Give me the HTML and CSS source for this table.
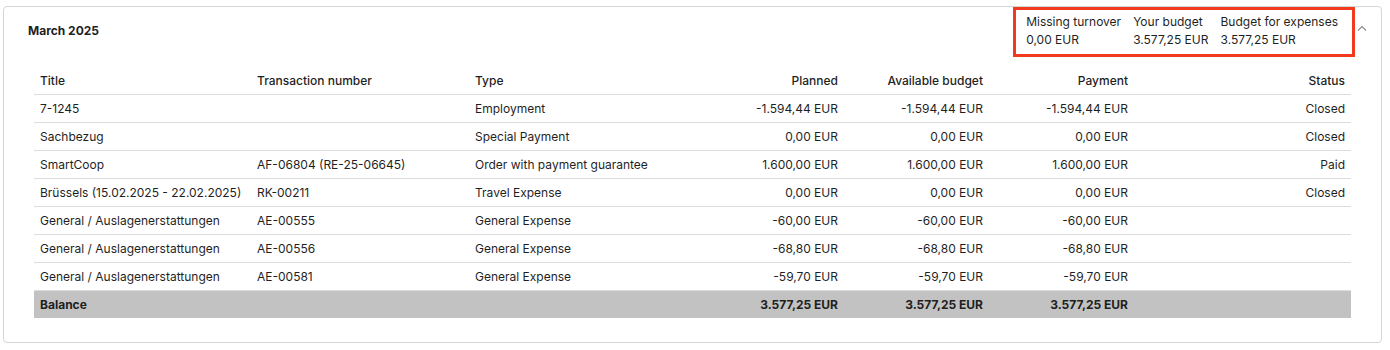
FILE: index.html
```html
<!DOCTYPE html>
<html>
<head>
<meta charset="utf-8">
<link rel="stylesheet" href="styles.css">
</head>
<body>
<div class="card">
  <div class="card-header">
    <div class="month">March 2025</div>
    <div class="summary">
      <div class="stat"><div>Missing turnover</div><div>0,00 EUR</div></div>
      <div class="stat"><div>Your budget</div><div>3.577,25 EUR</div></div>
      <div class="stat"><div>Budget for expenses</div><div>3.577,25 EUR</div></div>
    </div>
    <svg class="chevron" width="10" height="6" viewBox="0 0 10 6"><polyline points="1,5.5 5,1.5 9,5.5" fill="none" stroke="#8a8a8a" stroke-width="1.1"/></svg>
  </div>
  <table class="ledger">
    <colgroup>
      <col class="c1"><col class="c2"><col class="c3"><col class="c4"><col class="c5"><col class="c6"><col class="c7">
    </colgroup>
    <thead>
      <tr><th>Title</th><th>Transaction number</th><th>Type</th><th class="r">Planned</th><th class="r">Available budget</th><th class="r">Payment</th><th class="r">Status</th></tr>
    </thead>
    <tbody>
      <tr><td>7-1245</td><td></td><td>Employment</td><td class="r">-1.594,44 EUR</td><td class="r">-1.594,44 EUR</td><td class="r">-1.594,44 EUR</td><td class="r">Closed</td></tr>
      <tr><td>Sachbezug</td><td></td><td>Special Payment</td><td class="r">0,00 EUR</td><td class="r">0,00 EUR</td><td class="r">0,00 EUR</td><td class="r">Closed</td></tr>
      <tr><td>SmartCoop</td><td>AF-06804 (RE-25-06645)</td><td>Order with payment guarantee</td><td class="r">1.600,00 EUR</td><td class="r">1.600,00 EUR</td><td class="r">1.600,00 EUR</td><td class="r">Paid</td></tr>
      <tr><td>Brüssels (15.02.2025 - 22.02.2025)</td><td>RK-00211</td><td>Travel Expense</td><td class="r">0,00 EUR</td><td class="r">0,00 EUR</td><td class="r">0,00 EUR</td><td class="r">Closed</td></tr>
      <tr><td>General / Auslagenerstattungen</td><td>AE-00555</td><td>General Expense</td><td class="r">-60,00 EUR</td><td class="r">-60,00 EUR</td><td class="r">-60,00 EUR</td><td class="r"></td></tr>
      <tr><td>General / Auslagenerstattungen</td><td>AE-00556</td><td>General Expense</td><td class="r">-68,80 EUR</td><td class="r">-68,80 EUR</td><td class="r">-68,80 EUR</td><td class="r"></td></tr>
      <tr><td>General / Auslagenerstattungen</td><td>AE-00581</td><td>General Expense</td><td class="r">-59,70 EUR</td><td class="r">-59,70 EUR</td><td class="r">-59,70 EUR</td><td class="r"></td></tr>
      <tr class="balance"><td>Balance</td><td></td><td></td><td class="r">3.577,25 EUR</td><td class="r">3.577,25 EUR</td><td class="r">3.577,25 EUR</td><td class="r"></td></tr>
    </tbody>
  </table>
</div>
</body>
</html>
```
FILE: styles.css
```css
* { box-sizing: border-box; }
html, body { margin: 0; padding: 0; background: #fff; }
body {
  font-family: Inter, "Liberation Sans", sans-serif;
  font-size: 12px;
  color: #1f1f1f;
}
.card {
  margin: 6px 0 0 3px;
  width: 1379px;
  height: 337px;
  border: 1px solid #d6d6d6;
  border-radius: 4px;
}
.card-header {
  display: flex;
  align-items: flex-start;
  padding: 0 14px 0 24px;
}
.month {
  flex: 1;
  margin-top: 16px;
  font-weight: 700;
  line-height: 16px;
}
.summary {
  display: flex;
  gap: 12px;
  border: 3px solid #f23a1f;
  padding: 3px 14px 5px 10px;
  line-height: 18px;
  height: 50px;
}
.chevron {
  margin: 18px 0 0 2px;
}
.ledger {
  margin: 9px 30px 0 30px;
  width: 1317px;
  border-collapse: collapse;
  table-layout: fixed;
}
.c1 { width: 217px; }
.c2 { width: 218px; }
.c3 { width: 218px; }
.c4 { width: 157px; }
.c5 { width: 145px; }
.c6 { width: 145px; }
.c7 { width: 217px; }
.ledger th, .ledger td {
  height: 28px;
  padding: 0 6px;
  text-align: left;
  white-space: nowrap;
  border-bottom: 1px solid #dcdcdc;
}
.ledger th { font-weight: 500; padding-top: 1px; }
.ledger .r { text-align: right; }
.ledger tr.balance td {
  background: #c2c2c2;
  font-weight: 700;
  border-bottom: none;
}
```
